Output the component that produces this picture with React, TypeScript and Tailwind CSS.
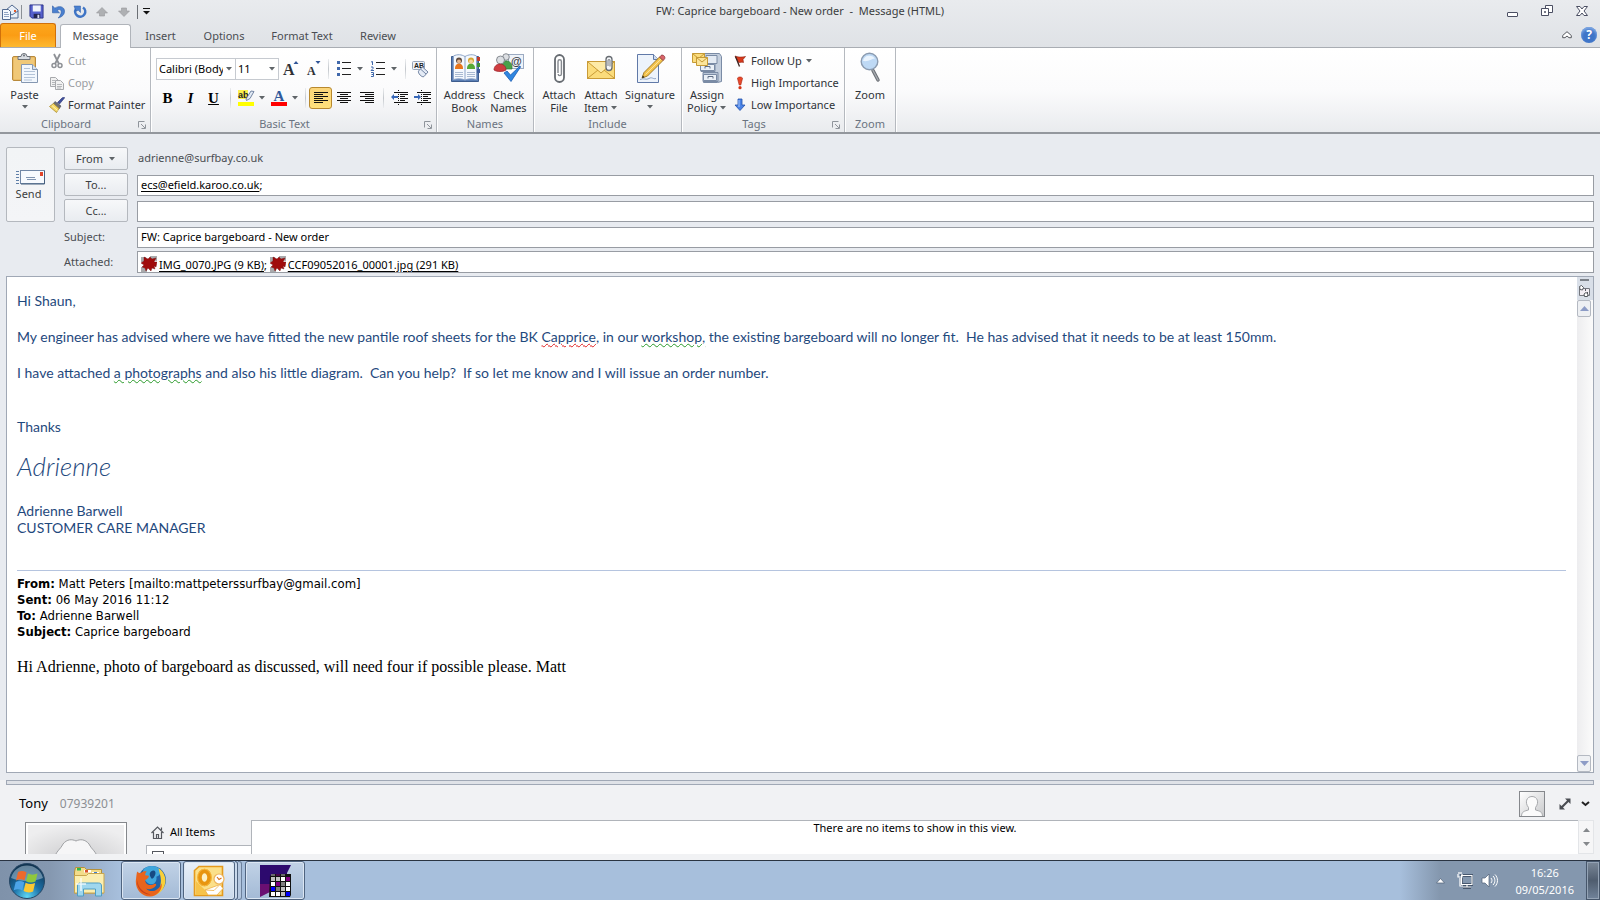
import React from "react";

type Kids = { children?: React.ReactNode };

const Arrow = ({ className = "" }: { className?: string }) => (
  <svg className={"h-1 w-2 shrink-0 " + className} viewBox="0 0 8 4" fill="#5f6468">
    <path d="M1 0h6L4 3.500z" />
  </svg>
);

const Sep = ({ className = "" }: { className?: string }) => (
  <span className={"flex h-5 shrink-0 justify-center " + className}>
    <span className="w-px bg-linear-to-b from-[#eceef0] via-[#c3c7cc] to-[#eceef0]" />
  </span>
);

function Group({ name, launcher, className = "", children }: Kids & { name: string; launcher?: boolean; className?: string }) {
  return (
    <section
      aria-label={name}
      className={"flex shrink-0 flex-col border-r border-[#b5b9bf] shadow-[1px_0_0_#fff] " + className}
    >
      <div className="flex grow">{children}</div>
      <div className="flex h-4 shrink-0 items-center leading-[18px] text-[#6a7380]">
        <span className="grow text-center">{name}</span>
        {launcher && (
          <button aria-label={name + " settings"} className="mr-1 ml-1.5 pt-0.5">
            <svg width="8" height="8" viewBox="0 0 8 8" fill="none" stroke="#8f949b">
              <path d="M.5 6.500V.5H6.500M3 3l4 4M7.500 3.500v4h-4" />
            </svg>
          </button>
        )}
      </div>
    </section>
  );
}

function Big({ icon, lines, arrow, className = "" }: { icon: React.ReactNode; lines: string[]; arrow?: "below" | "inline"; className?: string }) {
  return (
    <button className={"flex shrink-0 flex-col items-center justify-start pt-1 leading-[13px] text-[#2f3338] " + className}>
      <span className="mb-1 block size-8">{icon}</span>
      <span>{lines[0]}</span>
      {lines[1] && (
        <span className="flex items-center gap-0.5">
          {lines[1]}
          {arrow === "inline" && <Arrow />}
        </span>
      )}
      {arrow === "below" && <Arrow className="mt-1" />}
    </button>
  );
}

function Small({ icon, label, disabled, arrow }: { icon: React.ReactNode; label: string; disabled?: boolean; arrow?: boolean }) {
  return (
    <button
      disabled={disabled}
      className="flex h-[22px] items-center gap-[3px] whitespace-nowrap text-[#2f3338] disabled:text-[#9a9da1]"
    >
      {icon}
      <span>{label}</span>
      {arrow && <Arrow />}
    </button>
  );
}

const Tool = ({ label, className = "w-[23px]", children }: Kids & { label: string; className?: string }) => (
  <button aria-label={label} className={"flex h-[22px] shrink-0 items-center justify-center " + className}>
    {children}
  </button>
);

/* ---------- icons ---------- */

const PasteIcon = () => (
  <svg viewBox="0 0 32 32" className="size-8">
    <rect x="3.500" y="4.500" width="23" height="24" rx="1.500" fill="#eabb64" stroke="#b98a3c" />
    <path d="M5 6h20v21H5z" fill="#f0c878" />
    <path d="M9 7.500V4.500h3a3 3 0 0 1 6 0H21v3z" fill="#d9dde2" stroke="#6c7178" />
    <circle cx="15" cy="3.500" r="1" fill="#6c7178" />
    <path d="M12.500 12.500h11l5 5v13h-16z" fill="#f2f7fd" stroke="#8597b1" />
    <path d="M23.500 12.500v5h5" fill="#d5e1ef" stroke="#8597b1" />
    <path d="M15 16.500h6M15 19.500h11M15 22.500h11M15 25.500h11M15 28h8" stroke="#b3c3d8" />
  </svg>
);
const CutIcon = () => (
  <svg width="16" height="16" viewBox="0 0 16 16" fill="none" stroke="#8e9196" strokeWidth="1.500">
    <path d="M5 1l5 10M11 1L6 11" strokeWidth="1.800" />
    <circle cx="5" cy="12.500" r="2" />
    <circle cx="11" cy="12.500" r="2" />
  </svg>
);
const CopyIcon = () => (
  <svg width="16" height="16" viewBox="0 0 16 16" stroke="#a7a9ac" fill="#f1f1f1">
    <path d="M1.500 2.500h5l3 3v6h-8z" />
    <path d="M6.500 5.500h5l3 3v6h-8z" />
    <path d="M3 5.500h3M3 7.500h3M3 9.500h3M8 9.500h5M8 11.500h5M8 13h4" stroke="#b5b7ba" />
  </svg>
);
const BrushIcon = () => (
  <svg width="16" height="16" viewBox="0 0 16 16">
    <path d="M15.500 1l-5 6-2-1.500L13 1c1-1 3-1 2.500 0z" fill="#3f4f9e" stroke="#27306e" strokeWidth=".6" />
    <path d="M6 4.500l6 4.500-2 3-6-5z" fill="#6d6f76" stroke="#45474d" strokeWidth=".6" />
    <path d="M4.500 6.500l5.500 5-2.500 4L.5 9.500z" fill="#f3d667" stroke="#a98c2c" strokeWidth=".8" />
    <path d="M3 8.500l5.500 5" stroke="#fff3b0" />
  </svg>
);
const GrowA = ({ up }: { up?: boolean }) => (
  <svg width="20" height="22" viewBox="0 0 20 22">
    <text x={up ? 3 : 5} y="17" fontFamily="Liberation Serif, serif" fontWeight="bold" fontSize={up ? 16 : 12} fill="#2e3136">
      A
    </text>
    {up ? <path d="M13.500 6L16 3l2.500 3z" fill="#2f5597" /> : <path d="M13.500 3h5L16 6z" fill="#2f5597" />}
  </svg>
);
const BulletIcon = () => (
  <svg width="16" height="16" viewBox="0 0 16 16">
    <path d="M6 1.500h9M6 7.500h9M6 13.500h9" stroke="#222" />
    <path d="M1 0h3v3H1zM1 6h3v3H1zM1 12h3v3H1z" fill="#4068ab" />
  </svg>
);
const NumberIcon = () => (
  <svg width="16" height="16" viewBox="0 0 16 16" fill="none">
    <path d="M6 1.500h9M6 7.500h9M6 13.500h9" stroke="#222" />
    <path d="M1 1l1.500-.5v3.500M1 6h2v1.500L1 9.500h3M1 11.500h2.500v4H1M1.500 13.500h2" stroke="#4068ab" />
  </svg>
);
const StylesIcon = () => (
  <svg width="18" height="18" viewBox="0 0 18 18">
    <rect x=".5" y="1.500" width="12" height="8" rx="1" fill="#eef2f8" stroke="#98a5b8" />
    <text x="2" y="8" fontSize="7" fontWeight="bold" fontFamily="Liberation Sans, sans-serif" fill="#222">
      AB
    </text>
    <path d="M6.500 11l4-4 5.500 5-4 4.500c-2 1.500-6.500-3.500-5.500-5.500z" fill="#e4ebf6" stroke="#7385a3" />
    <path d="M8.500 9l5.500 5" stroke="#7385a3" />
  </svg>
);
const HighlightIcon = () => (
  <svg width="18" height="20" viewBox="0 0 18 20">
    <path d="M1 2h10v9H1z" fill="#fbf04b" />
    <text x="1" y="10" fontSize="9" fontWeight="bold" fontFamily="Liberation Sans, sans-serif" fill="#222">
      ab
    </text>
    <path d="M9 11l5-8 3 .5-4 7-3.500 2z" fill="#e2eaf5" stroke="#66799a" strokeWidth=".9" />
    <path d="M1 14h16v4H1z" fill="#ff0" />
  </svg>
);
const FontColorIcon = () => (
  <svg width="18" height="22" viewBox="0 0 18 22">
    <text x="3.500" y="14" fontSize="15" fontWeight="bold" fontFamily="Liberation Serif, serif" fill="#305a9c">
      A
    </text>
    <path d="M1 15h16v4H1z" fill="#f00" />
  </svg>
);
const AlignIcon = ({ d }: { d: string }) => (
  <svg width="16" height="14" viewBox="0 0 16 14" stroke="#111">
    <path d={d} />
  </svg>
);
const IndentIcon = ({ right }: { right?: boolean }) => (
  <svg width="18" height="16" viewBox="0 0 18 16">
    <path d="M3 2.500h14M9 4.500h8M9 6.500h5M9 8.500h8M9 10.500h5M3 12.500h14" stroke="#111" />
    <path d="M7.500 0v15" stroke="#111" strokeDasharray="1 1" />
    <path d={right ? "M7 7L4 4v2H0v2h4v2z" : "M0 7l3-3v2h4v2H3v2z"} fill="#3868b8" />
  </svg>
);
const BookIcon = () => (
  <svg viewBox="0 0 32 32" className="size-8">
    <path d="M2.500 4.500h27v25h-27z" fill="#5b7fb5" stroke="#3e5d8e" />
    <path d="M28 5h3v4h-3z" fill="#c23b2b" />
    <path d="M28 11h3v4h-3z" fill="#3f8f3a" />
    <path d="M28 17h3v4h-3z" fill="#3d5c9a" />
    <path d="M4.500 4c4-2 8-1.500 11.500.5C19.500 2.500 24 2 27.500 4v23.500c-4-1-8-1-11.500.5-3.500-1.500-7.500-1.500-11.500-.5z" fill="#f4f8fd" stroke="#8ca4c8" />
    <path d="M16 5v23" stroke="#8ca4c8" />
    <path d="M6 16c0-6 8-6 8 0v1H6z" fill="#e8761c" />
    <path d="M18 16c0-6 8-6 8 0v1h-8z" fill="#58a836" />
    <circle cx="10" cy="8.500" r="3" fill="#5d4a3e" />
    <circle cx="10" cy="9.500" r="2" fill="#e3b58e" />
    <circle cx="22" cy="8.500" r="3" fill="#d5a631" />
    <circle cx="22" cy="9.500" r="2" fill="#f5d49e" />
    <path d="M6 20.500h8M6 22.500h8M6 24.500h8M18 20.500h8M18 22.500h8M18 24.500h8" stroke="#a9bad2" />
  </svg>
);
const CheckNamesIcon = () => (
  <svg viewBox="0 0 32 32" className="size-8">
    <rect x="15.500" y="2.500" width="15" height="14" fill="#eef3fa" stroke="#9cabc2" />
    <circle cx="13" cy="5" r="3.300" fill="#dcdfe3" stroke="#70757c" strokeWidth=".8" />
    <path d="M8 15c0-8 11-8 11 0v2H9z" fill="#4aa04a" stroke="#2f7a34" strokeWidth=".7" />
    <circle cx="7.500" cy="8" r="4" fill="#dcdfe3" stroke="#70757c" strokeWidth=".8" />
    <path d="M1 18c0-8 12-8 12 0-3 2-9 2-12 0z" fill="#cf3c40" stroke="#9a2329" strokeWidth=".7" />
    <text x="18" y="13" fontSize="11" fontWeight="bold" fontFamily="Liberation Sans, sans-serif" fill="#3c4045">
      @
    </text>
    <path d="M11 21l3-2 3.500 4L27 14l.5 1L18 29.500z" fill="#2f86e0" stroke="#1b5cb4" strokeWidth=".8" />
  </svg>
);
const AttachFileIcon = () => (
  <svg viewBox="0 0 32 32" className="size-8">
    <rect x="12" y="3" width="9" height="27" rx="4.500" fill="#fff" stroke="#666b71" strokeWidth="1.800" />
    <path d="M15 21V9.500a1.700 1.700 0 0 1 3.400 0V22a1.600 1.600 0 0 1-3.200 0" fill="none" stroke="#85898f" strokeWidth="1.400" />
  </svg>
);
const AttachItemIcon = () => (
  <svg viewBox="0 0 32 32" className="size-8">
    <rect x="2.500" y="9.500" width="27" height="17" fill="#fbdc7c" stroke="#c99b38" />
    <path d="M3 10h26L16 20.500z" fill="#fdeaa7" />
    <path d="M3 26l10-8M29 26l-10-8M3 10l13 11 13-11" fill="none" stroke="#c99b38" />
    <rect x="21" y="4.500" width="6" height="14" rx="3" fill="#f4f6f9" stroke="#666b71" strokeWidth="1.300" />
    <path d="M23 14V8.500a1 1 0 0 1 2 0V14.500" fill="none" stroke="#85898f" strokeWidth="1.100" />
  </svg>
);
const SignatureIcon = () => (
  <svg viewBox="0 0 32 32" className="size-8">
    <path d="M3.500 2.500h16l5 5v23h-21z" fill="#edf3fb" stroke="#6079a8" />
    <path d="M19.500 2.500v5h5" fill="#cfdcef" stroke="#6079a8" />
    <path d="M6 27.500c4-2 6 1 9-1s4 1 7 0" fill="none" stroke="#8fa5c9" />
    <path d="M8 26l2-5.500L25.500 5l3.500 3.500L13.500 24z" fill="#f4c34c" stroke="#97701d" strokeWidth=".9" />
    <path d="M11.500 22.500L27 7" stroke="#fbe39a" />
    <path d="M25.500 5l1.500-1.500c2-1.500 5 1.500 3.500 3.500L29 8.500z" fill="#d9646a" stroke="#8c3b40" strokeWidth=".8" />
    <path d="M8 26l.8-2.500 1.700 1.700z" fill="#222" />
  </svg>
);
const PolicyIcon = () => (
  <svg viewBox="0 0 32 32" className="size-8">
    <path d="M12.500 1.500h16l2 3v25l-4 1h-14z" fill="#c3cedd" stroke="#7a8ba5" />
    <path d="M15 3.500h11v8H15zM10 11.500h14v8H10z" fill="#e3eaf3" stroke="#7a8ba5" />
    <path d="M12 20.500h15v9H12z" fill="#b9c6d8" stroke="#7a8ba5" />
    <path d="M9.500 12.500h14v6h-14zM12.500 22.500h13v6h-13z" fill="#eaf0f7" stroke="#7a8ba5" />
    <path d="M14 16.500v-2h5v2M17 26.500v-2h5v2" fill="none" stroke="#5e6d85" />
    <path d="M1.500 1.500h12v9h-12z" fill="#fbdc7c" stroke="#c59a36" />
    <path d="M1.500 1.500l6 5 6-5" fill="none" stroke="#c59a36" />
    <path d="M5.500 5.500h11v8h-11z" fill="#fce59a" stroke="#c59a36" />
    <path d="M5.500 5.500l5.500 4.500 5.500-4.500" fill="none" stroke="#c59a36" />
  </svg>
);
const FlagIcon = () => (
  <svg width="12" height="12" viewBox="0 0 12 12">
    <path d="M1 1c3 1 5 1.500 10.500.5L9 4.500l.5 3C7 6.500 6 8 4.500 7.500z" fill="#d83a1d" stroke="#8c1d0b" strokeWidth=".6" />
    <path d="M1.500 1.500l4 10" stroke="#3c2320" strokeWidth="1.300" />
  </svg>
);
const HighIcon = () => (
  <svg width="12" height="14" viewBox="0 0 12 14">
    <path d="M3.500 2.500C3.500.5 8.500.5 8.500 2.500L6.800 9H5.200z" fill="#e8492b" stroke="#a82410" strokeWidth=".6" />
    <circle cx="6" cy="11.700" r="1.600" fill="#d43517" />
  </svg>
);
const LowIcon = () => (
  <svg width="12" height="14" viewBox="0 0 12 14">
    <path d="M4 1h4v6h3l-5 5.500L1 7h3z" fill="#4a83e6" stroke="#2350a8" strokeWidth=".8" />
    <path d="M5 2v7" stroke="#a9c8fa" />
  </svg>
);
const ZoomIcon = () => (
  <svg viewBox="0 0 32 32" className="size-8">
    <path d="M19 18.500l5 9.500" stroke="#6d7177" strokeWidth="3.500" strokeLinecap="round" />
    <path d="M19 18.500l5 9.500" stroke="#a8acb1" strokeWidth="1.300" strokeLinecap="round" />
    <circle cx="15.500" cy="9.500" r="8.300" fill="#bed9f5" stroke="#8b9bb0" strokeWidth="1.400" />
    <path d="M9 9a6.500 6.500 0 0 1 12-2c-3-1-5 3-12 2z" fill="#eaf4fe" />
  </svg>
);
const SendIcon = () => (
  <svg width="29" height="15" viewBox="0 0 29 15">
    <path d="M0 1.500h3M0 4.500h3M0 7.500h3M0 10.500h3M0 13.500h3" stroke="#5f7fa8" />
    <rect x="4.500" y=".5" width="24" height="13" fill="#f7fafe" stroke="#7187a6" />
    <path d="M28.500 1v13H5" fill="none" stroke="#47607f" />
    <path d="M10 7.500h9M11 9.500h9" stroke="#8094b0" />
    <path d="M24 2h3v4h-3z" fill="#e0452b" />
  </svg>
);
const JpgIcon = () => (
  <svg width="16" height="16" viewBox="0 0 16 16" className="mr-0.5 inline-block align-[-3px]">
    <path d="M0 1h5v5L0 6zM9 0h7v5L9 4zM0 11h6v5H0z" fill="#a9aaac" />
    <path d="M3 1l4 2 2-2 2 2 4-1-2 4 3 0-1 5-2-1 1 3-3-1-1 3-3-3-2 3-1-3-3-1 2-2-3-2 3-2z" fill="#a00c0c" stroke="#6e0808" strokeWidth=".4" />
  </svg>
);

const TITLE_ICONS = {
  mail: (
    <svg width="18" height="18" viewBox="0 0 18 18">
      <path d="M5 7l6-5 6 5v8H5z" fill="#e9f0f9" stroke="#51698f" />
      <path d="M5 8l6 4 6-4" fill="none" stroke="#51698f" />
      <path d="M13 7h2v2h-2z" fill="#e05a2b" />
      <path d="M1.500 6.500h6l2 2v8h-8z" fill="#f4f8fd" stroke="#51698f" />
      <path d="M3 9.500h4M3 11.500h5M3 13.500h5" stroke="#8fa3c2" />
    </svg>
  ),
  save: (
    <svg width="15" height="15" viewBox="0 0 16 16">
      <path d="M1 1h14v14H3l-2-2z" fill="#5560cc" stroke="#2a3286" />
      <path d="M4 1.500h8.500V8H4z" fill="#f1f4fb" />
      <path d="M5 10.500h7V15H5z" fill="#23264f" />
      <path d="M9 11.500h2V15H9z" fill="#d8dcf2" />
    </svg>
  ),
  undo: (
    <svg width="13" height="14" viewBox="0 0 13 14">
      <path d="M.5.8v7h7L5.200 5.500c2.200-1.800 4.300-.8 4 1.800-.2 2-1.200 3.700-3 5.700 4-1 6.300-3.500 6.300-6.800C12.500 1.500 7 .3 2.800 3.200z" fill="#4a80cf" stroke="#2c5ba6" strokeWidth=".6" />
    </svg>
  ),
  redo: (
    <svg width="14" height="14" viewBox="0 0 14 14">
      <path d="M10 2.500A5 5 0 1 1 3 4" fill="none" stroke="#3f75c6" strokeWidth="2.600" />
      <path d="M1 1h6.500v6.500L5.300 5.300 3 6z" fill="#4a80cf" stroke="#2c5ba6" strokeWidth=".5" />
    </svg>
  ),
  prev: (
    <svg width="12" height="10" viewBox="0 0 12 10">
      <path d="M6 .5L11.500 6H8.500v3h-5V6H.5z" fill="#aeb0b3" stroke="#97999c" strokeWidth=".6" />
    </svg>
  ),
  next: (
    <svg width="12" height="10" viewBox="0 0 12 10">
      <path d="M6 9.500L.5 4h3V1h5v3h3z" fill="#aeb0b3" stroke="#97999c" strokeWidth=".6" />
    </svg>
  ),
};

/* ---------- window sections ---------- */

const quickButton = "flex w-[22px] justify-center";

function TitleBar() {
  return (
    <header className="grid h-6 shrink-0 grid-cols-[1fr_auto_1fr] items-center pb-px">
      <div className="flex items-center">
        <span className="w-[21px] pl-px">{TITLE_ICONS.mail}</span>
        <span className="mr-[3px] h-3.5 w-px bg-[#8b9096]" />
        <button aria-label="Save" className={quickButton}>{TITLE_ICONS.save}</button>
        <button aria-label="Undo" className={quickButton}>{TITLE_ICONS.undo}</button>
        <button aria-label="Redo" className={quickButton}>{TITLE_ICONS.redo}</button>
        <button aria-label="Previous item" className={quickButton}>{TITLE_ICONS.prev}</button>
        <button aria-label="Next item" className={quickButton}>{TITLE_ICONS.next}</button>
        <span className="ml-0.5 h-3.5 w-px bg-[#6b6f75]" />
        <button aria-label="Customize toolbar" className="flex w-4 justify-center">
          <svg width="7" height="7" viewBox="0 0 7 7">
            <path d="M0 .5h7" stroke="#111" />
            <path d="M0 3h7L3.500 6.500z" fill="#111" />
          </svg>
        </button>
      </div>
      <h1 className="whitespace-pre text-[#3b3d40]">FW: Caprice bargeboard - New order  -  Message (HTML)</h1>
      <div className="flex items-center justify-end gap-[22px] pr-3">
        <button aria-label="Minimize">
          <svg width="12" height="12" viewBox="0 0 12 12">
            <rect x=".5" y="6.500" width="10" height="4" rx=".5" fill="#fff" stroke="#4b4f63" />
          </svg>
        </button>
        <button aria-label="Restore">
          <svg width="13" height="13" viewBox="0 0 13 13" fill="#fff" stroke="#4b4f63">
            <path d="M4.500.5h7v7h-7z" />
            <path d="M.5 3.500h7v7h-7zM3.500 6.500h1v1h-1z" />
          </svg>
        </button>
        <button aria-label="Close">
          <svg width="12" height="12" viewBox="0 0 12 12">
            <path d="M.5.500h3.500L6 3 8 .5h3.500L8 5l3.500 4.500H8L6 7 4 9.500H.5L4 5z" fill="#fff" stroke="#4b4f63" />
          </svg>
        </button>
      </div>
    </header>
  );
}

const tab = "h-6 pt-0.5";

function Tabs() {
  return (
    <nav className="flex h-6 shrink-0 items-end border-b border-[#a9adb3] text-[#4a4d52]">
      <button className="h-6 w-14 rounded-t-[3px] border border-b-0 border-[#d0700a] bg-linear-to-b from-[#fca61c] via-[#fb9d14] to-[#fdb92f] pt-px text-white">File</button>
      <button className="-mb-px ml-1 h-6 w-[71px] rounded-t-[3px] border border-b-0 border-[#b0b4ba] bg-white">Message</button>
      <button className={tab + " w-[59px]"}>Insert</button>
      <button className={tab + " w-[68px]"}>Options</button>
      <button className={tab + " w-[88px]"}>Format Text</button>
      <button className={tab + " w-[64px]"}>Review</button>
      <span className="grow" />
      <button aria-label="Collapse ribbon" className="mr-[9px] flex h-6 items-center">
        <svg width="10" height="8" viewBox="0 0 10 8">
          <path d="M5 .7L9.300 4.500v2.200H7L5 5 3 6.700H.7V4.500z" fill="#fff" stroke="#55585e" />
        </svg>
      </button>
      <button aria-label="Help" className="mr-[3px] mb-1 flex size-4 items-center justify-center rounded-full bg-[#3f75c8] text-[12px] font-bold text-white shadow-[inset_0_2px_3px_#85ade6]">
        ?
      </button>
    </nav>
  );
}

function Combo({ label, value, className }: { label: string; value: string; className: string }) {
  return (
    <span className={"relative h-[22px] shrink-0 border border-[#c6cad0] bg-white " + className}>
      <select aria-label={label} className="h-full w-full appearance-none bg-transparent pr-3 pl-0.5 text-black outline-none">
        <option>{value}</option>
      </select>
      <Arrow className="pointer-events-none absolute top-2 right-0.5" />
    </span>
  );
}

const glyph = "w-[23px] font-['Liberation_Serif',serif] text-[15px] font-bold text-black ";

function Ribbon() {
  return (
    <div className="flex h-[86px] shrink-0 border-b-2 border-[#93979d] bg-linear-to-b from-white via-[#fbfbfc] to-[#e9ebee]">
      <Group name="Clipboard" launcher className="w-[151px]">
        <Big icon={<PasteIcon />} lines={["Paste"]} arrow="below" className="w-[49px]" />
        <div className="flex flex-col items-start pt-0.5">
          <Small icon={<CutIcon />} label="Cut" disabled />
          <Small icon={<CopyIcon />} label="Copy" disabled />
          <Small icon={<BrushIcon />} label="Format Painter" />
        </div>
      </Group>
      <Group name="Basic Text" launcher className="w-[286px]">
        <div className="flex flex-col gap-[7px] pt-2.5 pl-[5px]">
          <div className="flex items-center">
            <Combo label="Font" value="Calibri (Body)" className="w-20" />
            <Combo label="Font size" value="11" className="-ml-px w-11" />
            <Tool label="Grow font" className="w-[22px]"><GrowA up /></Tool>
            <Tool label="Shrink font" className="w-[22px]"><GrowA /></Tool>
            <Sep className="w-2.5" />
            <Tool label="Bullets" className="w-[34px] gap-1"><BulletIcon /><Arrow /></Tool>
            <Tool label="Numbering" className="w-[34px] gap-1"><NumberIcon /><Arrow /></Tool>
            <Sep className="w-2" />
            <Tool label="Styles"><StylesIcon /></Tool>
          </div>
          <div className="flex items-center">
            <Tool label="Bold" className={glyph}>B</Tool>
            <Tool label="Italic" className={glyph + "italic"}>I</Tool>
            <Tool label="Underline" className={glyph + "underline"}>U</Tool>
            <Sep className="w-2.5" />
            <Tool label="Highlight" className="w-[33px] gap-[3px]"><HighlightIcon /><Arrow /></Tool>
            <Tool label="Font color" className="w-[33px] gap-[3px]"><FontColorIcon /><Arrow /></Tool>
            <Sep className="w-2" />
            <Tool label="Align left" className="w-[23px] rounded-[3px] border border-[#b8892e] bg-linear-to-b from-[#fbd57b] to-[#ffe07a]">
              <AlignIcon d="M1 1.500h14M1 3.500h9M1 5.500h14M1 7.500h9M1 9.500h14M1 11.500h9" />
            </Tool>
            <Tool label="Center"><AlignIcon d="M1 1.500h14M4 3.500h8M1 5.500h14M4 7.500h8M1 9.500h14M4 11.500h8" /></Tool>
            <Tool label="Align right"><AlignIcon d="M1 1.500h14M6 3.500h9M1 5.500h14M6 7.500h9M1 9.500h14M6 11.500h9" /></Tool>
            <Sep className="w-2.5" />
            <Tool label="Decrease indent"><IndentIcon /></Tool>
            <Tool label="Increase indent"><IndentIcon right /></Tool>
          </div>
        </div>
      </Group>
      <Group name="Names" className="w-[97px]">
        <Big icon={<BookIcon />} lines={["Address", "Book"]} className="ml-[5px] w-[45px]" />
        <Big icon={<CheckNamesIcon />} lines={["Check", "Names"]} className="w-[43px]" />
      </Group>
      <Group name="Include" className="w-[148px]">
        <Big icon={<AttachFileIcon />} lines={["Attach", "File"]} className="ml-1 w-[42px]" />
        <Big icon={<AttachItemIcon />} lines={["Attach", "Item"]} arrow="inline" className="w-[42px]" />
        <Big icon={<SignatureIcon />} lines={["Signature"]} arrow="below" className="w-[56px]" />
      </Group>
      <Group name="Tags" launcher className="w-[163px]">
        <Big icon={<PolicyIcon />} lines={["Assign", "Policy"]} arrow="inline" className="ml-0.5 w-[46px]" />
        <div className="flex flex-col items-start pt-0.5 pl-1 [&_svg]:mr-0.5">
          <Small icon={<FlagIcon />} label="Follow Up" arrow />
          <Small icon={<HighIcon />} label="High Importance" />
          <Small icon={<LowIcon />} label="Low Importance" />
        </div>
      </Group>
      <Group name="Zoom" className="w-[51px]">
        <Big icon={<ZoomIcon />} lines={["Zoom"]} className="w-[50px]" />
      </Group>
    </div>
  );
}

const headerButton =
  "flex w-16 items-center justify-center gap-[5px] rounded-[2px] border border-[#b4b8be] bg-linear-to-b from-[#f7f8fa] to-[#e9ecf0] pt-px text-[#3b3d40]";
const field = "h-[21px] w-full border border-[#989ca3] bg-white px-[3px] text-black outline-none";

function Envelope() {
  return (
    <div className="flex shrink-0 items-start gap-[9px] pt-[13px] pr-1.5 pb-[3px] pl-1.5">
      <button className="flex h-[75px] w-[49px] shrink-0 flex-col items-center justify-center gap-px rounded-[2px] border border-[#b4b8be] bg-linear-to-b from-[#f2f4f6] to-[#f4f5f7] pt-0.5 leading-4 text-[#3b3d40]">
        <SendIcon />
        <span className="pr-1">Send</span>
      </button>
      <div className="grid grow grid-cols-[64px_1fr] gap-x-[9px]">
        <button className={headerButton + " mb-[3px] h-[23px]"}>
          From <Arrow />
        </button>
        <span className="h-[23px] pl-px leading-[22px] text-[#4a4d52]">adrienne@surfbay.co.uk</span>
        <button className={headerButton + " mb-[3px] h-[23px]"}>To...</button>
        <div className={field + " mt-0.5 flex items-center"}>
          <a href="mailto:ecs@efield.karoo.co.uk" className="underline underline-offset-2">ecs@efield.karoo.co.uk</a>
          <span>;</span>
          <input aria-label="To" className="min-w-0 grow outline-none" />
        </div>
        <button className={headerButton + " h-[23px]"}>Cc...</button>
        <input aria-label="Cc" className={field + " mt-0.5"} />
        <label htmlFor="subject" className="pt-[5px] leading-[19px] text-[#4a4d52]">Subject:</label>
        <input id="subject" defaultValue="FW: Caprice bargeboard - New order" className={field + " mt-[5px] pb-0.5"} />
        <span className="pt-1 leading-5 text-[#4a4d52]">Attached:</span>
        <div className="mt-[3px] h-[22px] border border-[#989ca3] bg-white px-[3px] leading-[25px] whitespace-nowrap text-black">
          <JpgIcon />
          <a href="#img" className="underline underline-offset-2">IMG_0070.JPG (9 KB)</a>; <JpgIcon />
          <a href="#ccf" className="underline underline-offset-2">CCF09052016_00001.jpg (291 KB)</a>
        </div>
      </div>
    </div>
  );
}

const ScrollButton = ({ up }: { up?: boolean }) => (
  <button
    aria-label={up ? "Scroll up" : "Scroll down"}
    className="mr-0.5 flex h-[17px] items-center justify-center rounded-[2px] border border-[#b4b9c2] bg-[#eef0f3]"
  >
    <svg width="9" height="5" viewBox="0 0 9 5" fill="#8d9cc6">
      <path d={up ? "M4.500 0L9 5H0z" : "M0 0h9L4.500 5z"} />
    </svg>
  </button>
);

const squiggle = "underline decoration-wavy decoration-1 underline-offset-1";

function MessageBody() {
  return (
    <main className="mx-1.5 flex min-h-0 grow border border-[#a0a8b5] bg-white">
      <article className="min-w-0 grow overflow-hidden pt-[15px] pr-[11px] pl-2.5 font-['Lato','Noto_Sans',sans-serif] text-[14px] leading-[18px] text-[#1f497d]">
        <p>Hi Shaun,</p>
        <p className="mt-[18px] whitespace-pre-wrap">
          My engineer has advised where we have fitted the new pantile roof sheets for the BK{" "}
          <span className={squiggle + " decoration-[#e02020]"}>Capprice</span>, in our{" "}
          <span className={squiggle + " decoration-[#2a9a2a]"}>workshop,</span> the existing bargeboard will no longer fit.{"  "}He has advised that it needs to be at least 150mm.
        </p>
        <p className="mt-[18px] whitespace-pre-wrap">
          I have attached <span className={squiggle + " decoration-[#2a9a2a]"}>a photographs</span> and also his little diagram.{"  "}Can you help?{"  "}If so let me know and I will issue an order number.
        </p>
        <p className="mt-9">Thanks</p>
        <p className="mt-[15px] font-['Bradley_Hand_ITC','Lato',cursive] text-[26px] leading-[30px] font-light italic">Adrienne</p>
        <p className="mt-[21px] leading-[17px]">
          Adrienne Barwell
          <br />
          CUSTOMER CARE MANAGER
        </p>
        <hr className="mt-[34px] mb-[5px] border-[#b5c4df]" />
        <div className="font-['DejaVu_Sans_Condensed','Noto_Sans',sans-serif] text-[13px] leading-4 text-black">
          <p><b>From:</b> Matt Peters [mailto:mattpeterssurfbay@gmail.com]</p>
          <p><b>Sent:</b> 06 May 2016 11:12</p>
          <p><b>To:</b> Adrienne Barwell</p>
          <p><b>Subject:</b> Caprice bargeboard</p>
        </div>
        <p className="mt-[18px] font-['Liberation_Serif',serif] text-[16px] text-black">
          Hi Adrienne, photo of bargeboard as discussed, will need four if possible please. Matt
        </p>
      </article>
      <div className="flex w-4 shrink-0 flex-col bg-linear-to-r from-[#ededef] to-[#fbfbfb]">
        <div className="flex h-[23px] shrink-0 flex-col items-center bg-[#d9dfe8] pt-0.5 pr-0.5">
          <span className="mb-1 h-0.5 w-[9px] shrink-0 bg-[#7c8188]" />
          <svg width="13" height="13" viewBox="0 0 13 13" className="shrink-0">
            <path d="M1.500 3.500h10v7h-10z" fill="#f3eef4" stroke="#74777e" />
            <path d="M1.500 1.500l2-1 2 2-1 2.500-2.500-.5zM6 9l2-1.500 2 1.500-.5 2.500h-3z" fill="#fff" stroke="#55585e" />
            <path d="M7.500 4v2M9.500 7v2" stroke="#55585e" />
          </svg>
        </div>
        <ScrollButton up />
        <span className="grow" />
        <ScrollButton />
      </div>
    </main>
  );
}

function PeoplePane() {
  return (
    <section className="shrink-0 bg-[#f1f2f4] pb-1.5">
      <div className="mx-1.5 h-[5px] border border-[#a0a8b5] bg-[#dfe2e7]" />
      <div className="flex h-[35px] items-center pt-0.5 pr-1.5 pl-[19px] text-[13px]">
        <span className="text-black">Tony</span>
        <span className="ml-3 text-[12px] text-[#8c8f93]">07939201</span>
        <span className="grow" />
        <span className="mr-3.5 size-[26px] border border-[#85888c] bg-linear-to-br from-white to-[#c9cacc]">
          <svg viewBox="0 0 24 24" className="size-6">
            <path d="M1.500 24.500c0-5 3-5.500 7-6.500v-2.500c-4-5-2-11 3.500-11s7.500 6 3.500 11V18c4 1 7 1.500 7 6.500z" fill="#fbfbfb" stroke="#a7a9ac" />
          </svg>
        </span>
        <button aria-label="Expand" className="mr-2.5">
          <svg width="12" height="12" viewBox="0 0 12 12">
            <path d="M6 .5h5.500V6L9.500 4 4 9.500l2 2H.5V6l2 2L8 2.500z" fill="#4a4d52" />
          </svg>
        </button>
        <button aria-label="Collapse" className="mr-1">
          <svg width="9" height="6" viewBox="0 0 9 6" fill="none" stroke="#222" strokeWidth="2">
            <path d="M1 1l3.500 3L8 1" />
          </svg>
        </button>
      </div>
      <div className="flex h-[34px] overflow-hidden pr-1.5 pl-[25px]">
        <div className="mt-0.5 h-[60px] w-[102px] shrink-0 border border-[#85888c] bg-white p-0.5">
          <svg viewBox="0 0 96 56" className="h-14 w-24">
            <defs>
              <radialGradient id="shade" cx=".5" cy=".7" r=".7">
                <stop offset="0" stopColor="#c8c8ca" />
                <stop offset="1" stopColor="#eeeeef" />
              </radialGradient>
            </defs>
            <path d="M0 0h96v56H0z" fill="url(#shade)" />
            <path d="M26 34c2-8 6-9 9-15 4-5 9-5 13-3 4-2 9-2 13 3 3 6 7 7 9 15v22H26z" fill="#f6f6f7" stroke="#9fa1a4" />
          </svg>
        </div>
        <div className="ml-[19px] flex w-[105px] shrink-0 flex-col">
          <button className="flex h-[25px] shrink-0 items-center gap-1.5 pl-[5px] text-black">
            <svg width="13" height="13" viewBox="0 0 13 13" fill="none" stroke="#55585e" strokeWidth="1.200">
              <path d="M.5 7L6.500 1l6 6M2.500 6v6.500h8V6M10.500 1.500V4M5.500 12.500v-4h2v4" />
            </svg>
            All Items
          </button>
          <button className="flex h-6 w-full shrink-0 items-start gap-1.5 border-t border-l border-[#b0b4ba] bg-white pt-[5px] pl-[5px] leading-[14px] text-black">
            <span className="size-3 border border-[#55585e]" />
            Activities
          </button>
        </div>
        <div className="min-w-0 grow border-t border-l border-[#b0b4ba] bg-white text-center leading-[14px] text-black">
          There are no items to show in this view.
        </div>
        <div className="flex w-4 shrink-0 flex-col items-center justify-between border border-[#e3e5e8] bg-[#f6f6f7] py-[7px]">
          <svg width="7" height="4" viewBox="0 0 7 4" fill="#85888c"><path d="M3.500 0L7 4H0z" /></svg>
          <svg width="7" height="4" viewBox="0 0 7 4" fill="#85888c"><path d="M0 0h7L3.500 4z" /></svg>
        </div>
      </div>
    </section>
  );
}

const TaskButton = ({ label, className, children }: Kids & { label: string; className: string }) => (
  <button
    aria-label={label}
    className={"flex h-[39px] shrink-0 items-center justify-center rounded-[3px] border border-[#4f6480] shadow-[inset_0_0_0_1px_#dbe6f3] " + className}
  >
    {children}
  </button>
);

function Taskbar() {
  return (
    <footer className="flex h-10 shrink-0 items-start border-t border-[#2a3442] bg-[linear-gradient(90deg,#7f92aa_0,#8598b0_50px,#a7bfdc_120px,#a7bfdc_calc(100%-200px),#8497ae_calc(100%-160px),#8497ae_100%)]">
      <button aria-label="Start" className="ml-2 flex h-[39px] w-[38px] items-center">
        <svg width="38" height="38" viewBox="0 0 38 38">
          <defs>
            <radialGradient id="orb" cx=".5" cy=".95" r=".9">
              <stop offset="0" stopColor="#5fd8f5" />
              <stop offset=".45" stopColor="#1b6fa6" />
              <stop offset="1" stopColor="#0f3350" />
            </radialGradient>
          </defs>
          <circle cx="19" cy="19" r="17.500" fill="url(#orb)" stroke="#274765" />
          <path d="M3 16a16.500 16.500 0 0 1 32 0c-9 4-23 4-32 0z" fill="#b9cfe0" opacity=".5" />
          <path d="M10 10c3-1.500 5.500-1.200 8.500.3l-2 8.200c-2.800-1.500-5.500-1.600-8.500 0z" fill="#ee6a2c" />
          <path d="M20 11.500c3 1.500 5.800 1.500 9.500 0L27.500 19.500c-3.500 1.500-6.600 1.200-9.500-.3z" fill="#90c83c" />
          <path d="M7.700 20c3-1.500 5.700-1.300 8.500.2L14.300 28.500c-2.800-1.600-5.500-1.600-8.600-.2z" fill="#4da4e8" />
          <path d="M17.600 20.800c3 1.500 6 1.700 9.500.3l-2 8.400c-3.500 1.400-6.600 1.100-9.500-.4z" fill="#fcc832" />
        </svg>
      </button>
      <button aria-label="File Explorer" className="ml-[26px] flex h-[39px] w-[34px] items-center justify-center">
        <svg width="34" height="32" viewBox="0 0 34 32">
          <path d="M2.500 7l1-4.500h9l2 2h15V9h2v19h-29z" fill="#f3dc8a" stroke="#b5913c" />
          <path d="M5 3h4v2.500H5z" fill="#2fb84a" />
          <path d="M12 5h7v2.500h-7z" fill="#fff" />
          <path d="M13 5h3v2.500h-3z" fill="#d9532c" />
          <path d="M20 7h7v2.500h-7z" fill="#fff" />
          <path d="M22 7h3v2.500h-3z" fill="#3b7fd0" />
          <path d="M2.500 10.500h12l2-2h15.500V28h-29.500z" fill="#fbeeb0" stroke="#c9a74e" />
          <path d="M5.500 31V21c0-2 1-3 3-3h18c2 0 3 1 3 3v10h-6v-7h-12v7z" fill="#9fd7ee" stroke="#4f9dc4" />
          <path d="M9 13v13M4 19h10" stroke="#fff" strokeWidth="1.500" opacity=".8" />
        </svg>
      </button>
      <TaskButton label="Firefox" className="ml-[15px] w-[60px] bg-linear-to-b from-[#c1d2e6] to-[#a3bad6]">
        <svg width="32" height="32" viewBox="0 0 30 30">
          <circle cx="16" cy="14" r="13" fill="#1f62a8" />
          <path d="M8 4c4-4 12-4 15 0 2 4 0 6-3 7 1 4-2 8-6 7-5-2-8-8-6-14z" fill="#3fa6dc" />
          <path d="M15 6c3-2 5 0 4 3s-3 5-4 3-2-4 0-6z" fill="#164a83" />
          <path d="M22 3c7 4 9 14 3 21-3 4-8 5.500-12 4.500 7-1 11-5 11-11 1-5-1-10-2-14.500z" fill="#f8cf3a" />
          <path d="M2 6c1 1 2 1.500 3.500 1.500C7 6 9 5.500 11 6c-1 1-1.500 2-1.500 3.500l3.500.5c0 2-1.500 3-3.500 4 0 4 4 6 8 4 2-1 3 0 2 1.500-2 3-7 4-9 2.500 4 5 12 2 14.500-5 1 6-4 12.500-11 12.500C5 29.500-.5 21 1 13c.3-2.500.5-5 1-7z" fill="#e8641d" />
          <path d="M2 14c1 8 6 12 13 13.500-7 1-14-5.500-13-13.500z" fill="#c8401a" />
        </svg>
      </TaskButton>
      <TaskButton label="Outlook" className="ml-[2px] w-[52px] bg-linear-to-b from-[#e9f0f8] to-[#c9d9ec]">
        <svg width="32" height="32" viewBox="0 0 32 32">
          <path d="M6 1.500h23.500v29H1.500v-25z" fill="#fbe08a" stroke="#e59a1c" strokeWidth="1.600" />
          <path d="M3 30V16l14 14z" fill="#f7c34a" />
          <path d="M12 25l15-5.500 3 4-6 6.500H15z" fill="#fff" stroke="#edb04a" strokeWidth=".8" />
          <path d="M12 25l9 .5 6-6" stroke="#edb04a" fill="none" strokeWidth=".8" />
          <ellipse cx="11.500" cy="12.500" rx="5" ry="6.500" fill="#fdf1c4" stroke="#e8950f" strokeWidth="4.500" />
          <ellipse cx="11.500" cy="12.500" rx="6.800" ry="8.300" fill="none" stroke="#f9c04a" strokeWidth=".8" />
          <circle cx="26" cy="14" r="5" fill="#fff" stroke="#eeb45a" strokeWidth="1.200" />
          <path d="M24 12l2 2.500 2.500-1.500" stroke="#d9731a" fill="none" strokeWidth="1.200" />
        </svg>
      </TaskButton>
      <span className="h-[39px] w-[3px] rounded-r-[3px] border border-l-0 border-[#4f6480] bg-[#c9d9ec]" />
      <span className="h-[39px] w-1 rounded-r-[3px] border border-l-0 border-[#6b809c] bg-[#b4c7df]" />
      <TaskButton label="Database" className="ml-[3px] w-[60px] bg-linear-to-b from-[#c1d2e6] to-[#a3bad6]">
        <svg width="34" height="34" viewBox="0 0 34 34">
          <path d="M2 1h31l-4 8v3H12v12H2z" fill="#2d0a6e" />
          <path d="M2 20h10v8l-10 5z" fill="#6a0f72" />
          <path d="M12 12l2-2h19v21l-1 2H11z" fill="#111" />
          <path d="M13 11h4M23 11h4" stroke="#c0c0c0" />
          <path d="M18 11h4" stroke="#800080" />
          {["#c0c0c0", "#c0c0c0", "#fff", "#800080", "#fff", "#800080", "#808080", "#fff", "#00f", "#808080", "#c0c0c0", "#fff", "#fff", "#fff", "#c0c0c0", "#00f"].map((fill, i) => (
            <rect key={i} x={13 + (i % 4) * 5} y={13 + Math.floor(i / 4) * 5} width="4" height="4" fill={fill} />
          ))}
        </svg>
      </TaskButton>
      <span className="grow" />
      <div className="flex h-[39px] items-center text-white">
        <button aria-label="Show hidden icons" className="mr-3">
          <svg width="9" height="6" viewBox="0 0 9 6"><path d="M4.500.5L8.500 5h-8z" fill="#fff" stroke="#4f6077" strokeWidth=".7" /></svg>
        </button>
        <button aria-label="Network" className="mr-2">
          <svg width="16" height="17" viewBox="0 0 16 17" fill="none">
            <path d="M4.500 3.500h11v9h-11zM6 15.500h8M10 13v3" stroke="#34445a" strokeWidth="2.500" />
            <path d="M4.500 3.500h10.500v9H4.500zM6 15h8M10 13v2M3 6v8h3M1 2v3h4V2M2 0v2M4 0v2" stroke="#fff" strokeWidth="1.200" />
          </svg>
        </button>
        <button aria-label="Volume" className="mr-[17px]">
          <svg width="17" height="15" viewBox="0 0 17 15">
            <path d="M1 5h3l4-4v13l-4-4H1z" fill="#fff" stroke="#4f6077" strokeWidth=".7" />
            <path d="M10 5c1.300 1.500 1.300 3.500 0 5M12 3c2.500 2.500 2.500 6.500 0 9M14 1.500c3.300 3.300 3.300 8.700 0 12" fill="none" stroke="#fff" />
          </svg>
        </button>
        <time className="mr-3 text-center leading-[17px]">
          16:26
          <br />
          09/05/2016
        </time>
        <button aria-label="Show desktop" className="h-[39px] w-3.5 border border-[#46566b] bg-linear-to-b from-[#7b8898] via-[#4f5d6f] to-[#71839a] shadow-[inset_0_0_0_1px_#94a3b5]" />
      </div>
    </footer>
  );
}

export default function App() {
  return (
    <div className="flex h-screen flex-col overflow-hidden bg-[#e8ebf0] font-['Noto_Sans',sans-serif] text-[11px]">
      <div className="flex shrink-0 flex-col bg-linear-to-b from-[#e9ebee] to-[#dfe2e6]">
        <TitleBar />
        <Tabs />
      </div>
      <Ribbon />
      <Envelope />
      <MessageBody />
      <div className="h-[7px] shrink-0" />
      <PeoplePane />
      <Taskbar />
    </div>
  );
}
